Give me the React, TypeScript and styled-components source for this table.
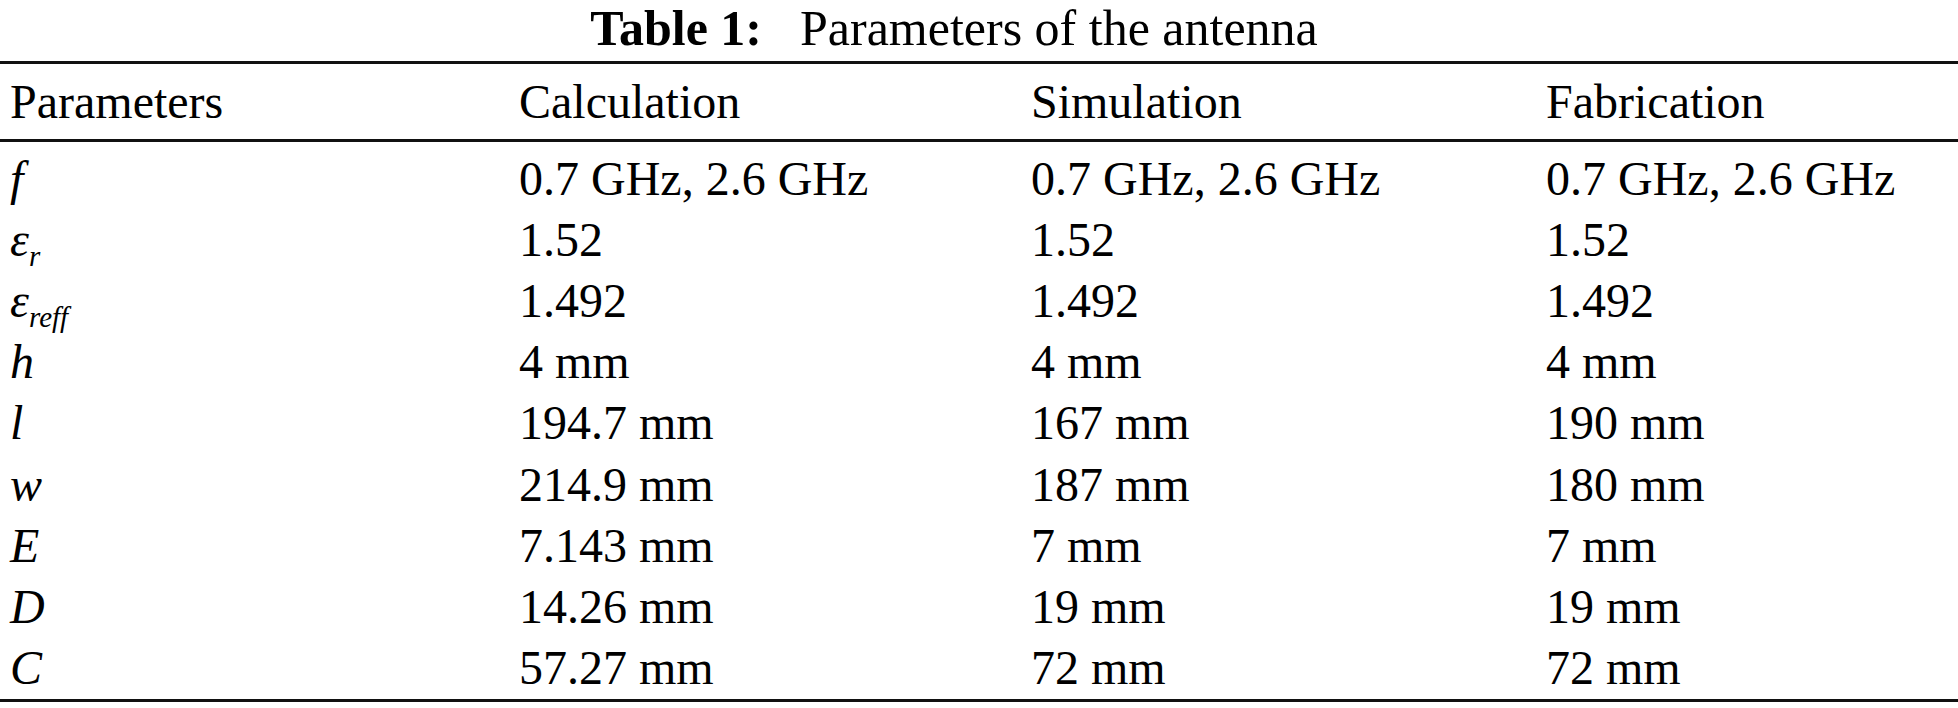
import React from "react";
import styled, { createGlobalStyle } from "styled-components";

const GlobalStyle = createGlobalStyle`
  html, body {
    margin: 0;
    padding: 0;
    background: #fff;
  }
  body {
    font-family: "Liberation Serif", "Times New Roman", serif;
    color: #000;
  }
`;

const Page = styled.div`
  width: 1958px;
  height: 708px;
  display: flex;
  flex-direction: column;
  overflow: hidden;
`;

const Caption = styled.div`
  height: 61px;
  display: flex;
  justify-content: center;
  align-items: flex-start;
  gap: 38px;
  font-size: 50px;
  line-height: 56px;
  padding-right: 50px;
  box-sizing: border-box;
  white-space: nowrap;
`;

const CaptionLabel = styled.b`
  font-weight: 700;
`;

const CaptionText = styled.span``;

const Rule = styled.div`
  height: 3px;
  background: #111;
  flex-shrink: 0;
`;

const Row = styled.div<{ $height: number }>`
  display: grid;
  grid-template-columns: 509px 512px 515px 1fr;
  padding-left: 10px;
  height: ${(p) => p.$height}px;
  align-items: center;
  font-size: 48px;
  line-height: 1;
  white-space: nowrap;
`;

const Body = styled.div`
  padding-top: 6px;
  display: flex;
  flex-direction: column;
`;

const Cell = styled.div``;

const Symbol = styled.span`
  font-style: italic;
`;

const Sub = styled.sub`
  font-style: italic;
  font-size: 29px;
  vertical-align: -10px;
  line-height: 0;
`;

type Param = { sym: React.ReactNode; calc: string; sim: string; fab: string };

const rows: Param[] = [
  { sym: <Symbol>f</Symbol>, calc: "0.7 GHz, 2.6 GHz", sim: "0.7 GHz, 2.6 GHz", fab: "0.7 GHz, 2.6 GHz" },
  { sym: <Symbol>ε<Sub>r</Sub></Symbol>, calc: "1.52", sim: "1.52", fab: "1.52" },
  { sym: <Symbol>ε<Sub>reff</Sub></Symbol>, calc: "1.492", sim: "1.492", fab: "1.492" },
  { sym: <Symbol>h</Symbol>, calc: "4 mm", sim: "4 mm", fab: "4 mm" },
  { sym: <Symbol>l</Symbol>, calc: "194.7 mm", sim: "167 mm", fab: "190 mm" },
  { sym: <Symbol>w</Symbol>, calc: "214.9 mm", sim: "187 mm", fab: "180 mm" },
  { sym: <Symbol>E</Symbol>, calc: "7.143 mm", sim: "7 mm", fab: "7 mm" },
  { sym: <Symbol>D</Symbol>, calc: "14.26 mm", sim: "19 mm", fab: "19 mm" },
  { sym: <Symbol>C</Symbol>, calc: "57.27 mm", sim: "72 mm", fab: "72 mm" },
];

export default function App() {
  return (
    <>
      <GlobalStyle />
      <Page>
        <Caption>
          <CaptionLabel>Table 1:</CaptionLabel>
          <CaptionText>Parameters of the antenna</CaptionText>
        </Caption>
        <Rule />
        <Row $height={75}>
          <Cell>Parameters</Cell>
          <Cell>Calculation</Cell>
          <Cell>Simulation</Cell>
          <Cell>Fabrication</Cell>
        </Row>
        <Rule />
        <Body>
          {rows.map((r, i) => (
            <Row key={i} $height={61.2}>
              <Cell>{r.sym}</Cell>
              <Cell>{r.calc}</Cell>
              <Cell>{r.sim}</Cell>
              <Cell>{r.fab}</Cell>
            </Row>
          ))}
        </Body>
        <Rule />
      </Page>
    </>
  );
}
